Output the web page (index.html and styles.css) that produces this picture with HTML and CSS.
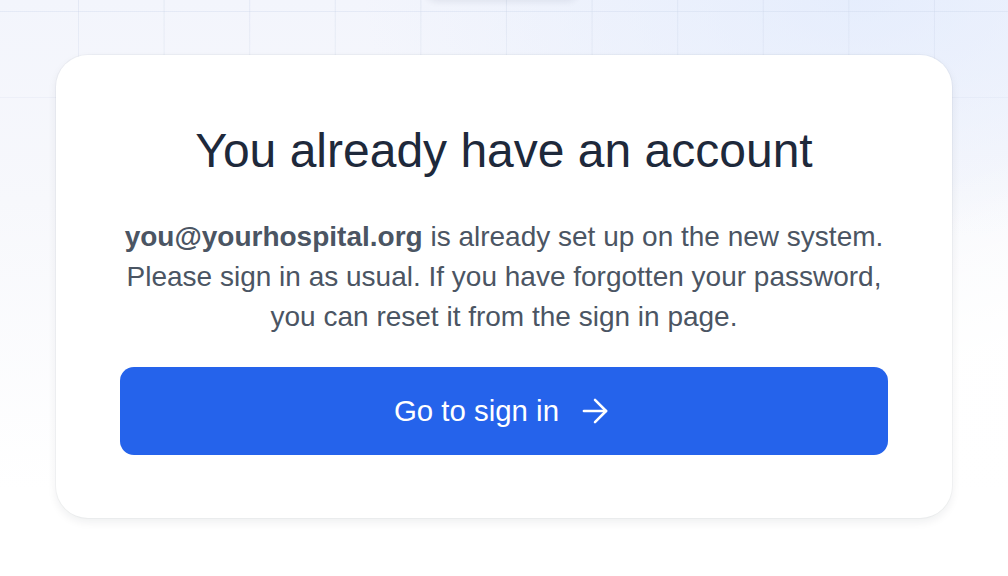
FILE: index.html
```html
<!DOCTYPE html>
<html lang="en">
<head>
    <meta charset="UTF-8">
    <meta name="viewport" content="width=device-width, initial-scale=1.0">
    <title>Account exists</title>
    <link rel="stylesheet" href="styles.css">
</head>
<body>
    <div class="page">
        <div class="page-grid"></div>
        <div class="logo-shadow"></div>

        <main class="card">
            <h1 class="card-title">You already have an account</h1>
            <p class="card-text">
                <strong>you@yourhospital.org</strong> is already set up on the new system.
                Please sign in as usual. If you have forgotten your password,
                you can reset it from the sign in page.
            </p>
            <a class="primary-btn" href="#">
                <span>Go to sign in</span>
                <svg class="btn-icon" viewBox="0 0 24 24" fill="none" stroke="currentColor" stroke-width="1.6" stroke-linecap="round" stroke-linejoin="round">
                    <path d="M5 12h14"></path>
                    <path d="M12 5l7 7-7 7"></path>
                </svg>
            </a>
        </main>
    </div>
</body>
</html>
```

FILE: styles.css
```css
* {
    box-sizing: border-box;
}

body {
    margin: 0;
    font-family: "Liberation Sans", Arial, sans-serif;
    background-color: #ffffff;
}

.page {
    position: relative;
    min-height: 576px;
    overflow: hidden;
    padding-top: 55px;
    background:
        linear-gradient(160deg, transparent 55%, rgba(255, 255, 255, 0.9) 75%),
        linear-gradient(to bottom, #f3f5fc 0%, #f7f8fc 35%, #ffffff 85%);
}

.page::before {
    content: "";
    position: absolute;
    inset: 0;
    background: radial-gradient(ellipse 70% 60% at 85% 0%, rgba(224, 234, 253, 0.7), transparent 70%);
}

/* faint grid that fades out further down */
.page-grid {
    position: absolute;
    inset: 0;
    background-image:
        linear-gradient(to right, rgba(200, 210, 230, 0.35) 1px, transparent 1px),
        linear-gradient(to bottom, rgba(200, 210, 230, 0.35) 1px, transparent 1px);
    background-size: 85.6px 86px;
    background-position: 78px 11px;
    -webkit-mask-image: linear-gradient(to bottom, #000 0%, rgba(0, 0, 0, 0.5) 18%, transparent 30%);
    mask-image: linear-gradient(to bottom, #000 0%, rgba(0, 0, 0, 0.5) 18%, transparent 30%);
}

.logo-shadow {
    position: absolute;
    top: -60px;
    left: 424px;
    width: 156px;
    height: 60px;
    border-radius: 14px;
    background-color: #f5f7fd;
    box-shadow: 0 2px 6px rgba(30, 41, 59, 0.08);
}

.card {
    position: relative;
    width: 896px;
    margin: 0 auto;
    padding: 67px 64px 63px;
    background-color: #fff;
    border-radius: 32px;
    box-shadow: 0 0 0 1px rgba(15, 23, 42, 0.03), 0 4px 10px rgba(15, 23, 42, 0.07);
    text-align: center;
}

.card-title {
    margin: 0;
    font-size: 48px;
    line-height: 57px;
    font-weight: 400;
    color: #1e293b;
}

.card-text {
    margin: 38px 0 30px;
    font-size: 28px;
    line-height: 40px;
    color: #4b5563;
}

.card-text strong {
    color: #4b5563;
    font-weight: 700;
}

.primary-btn {
    display: flex;
    align-items: center;
    justify-content: center;
    gap: 17px;
    height: 88px;
    border-radius: 14px;
    background-color: #2563eb;
    color: #fff;
    font-size: 29.4px;
    text-decoration: none;
}

.btn-icon {
    width: 38px;
    height: 38px;
}
```
